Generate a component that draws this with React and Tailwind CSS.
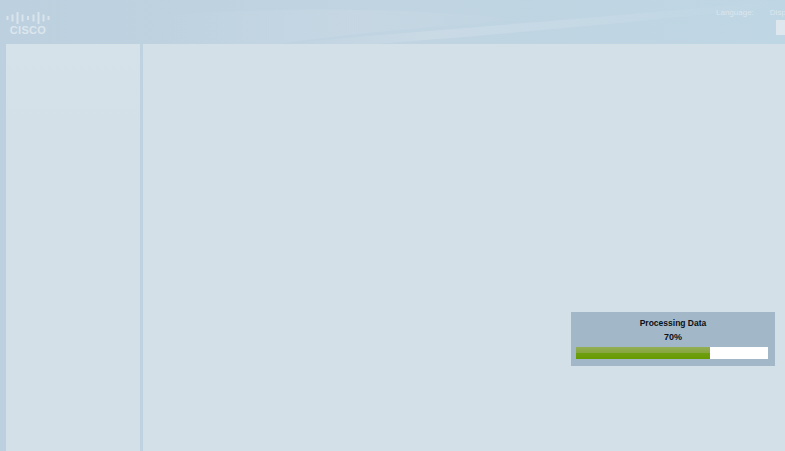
export default function App() {
  return (
    <div className="relative flex h-[451px] w-[785px] flex-col overflow-hidden bg-[#bdd0df] font-['Liberation_Sans',Arial,sans-serif]">
      <header className="relative flex h-[44px] shrink-0 justify-between overflow-hidden bg-gradient-to-r from-[#bcd0df] via-[#c0d4e1] to-[#bfd6e4]">
        <svg className="absolute inset-0" width="785" height="44" viewBox="0 0 785 44" aria-hidden="true">
          <defs>
            <linearGradient id="sw" x1="0" x2="1" y1="0" y2="0">
              <stop offset="0" stopColor="#d0dee8" stopOpacity="0" />
              <stop offset="0.3" stopColor="#d0dee8" stopOpacity="0.6" />
              <stop offset="1" stopColor="#cfe1ec" stopOpacity="0" />
            </linearGradient>
            <linearGradient id="sw2" x1="0" x2="1" y1="0" y2="0">
              <stop offset="0" stopColor="#cbdae5" stopOpacity="0" />
              <stop offset="0.55" stopColor="#cbdae5" stopOpacity="0.55" />
              <stop offset="1" stopColor="#cbdae5" stopOpacity="0" />
            </linearGradient>
          </defs>
          <path d="M280 44 C400 32 560 22 785 0 L785 6 C620 24 480 36 370 44 Z" fill="url(#sw)" />
          <path d="M150 16 C280 6 420 8 520 20 C440 26 340 34 280 44 L170 44 Z" fill="url(#sw2)" />
        </svg>
        <div className="relative ml-[6px] mt-[12px] flex w-[44px] flex-col items-center">
          <svg width="44" height="12" viewBox="0 0 44 12" aria-hidden="true">
            {[
              [1.5, 4], [6.5, 7], [11.5, 12], [16.5, 7], [22, 4], [27.5, 7], [32.5, 12], [37.5, 7], [42.5, 4],
            ].map(([x, h], i) => (
              <rect key={i} x={x - 1} y={(12 - h) / 2} width="2" height={h} fill="#d9e4ec" />
            ))}
          </svg>
          <span className="mt-[2px] text-[11px] font-bold leading-[9px] tracking-[0.3px] text-[#dce6ed]">CISCO</span>
        </div>
        <div className="relative flex flex-col items-end">
          <div className="mt-[7px] flex w-[69px] gap-[16px] overflow-hidden whitespace-nowrap text-[8px] leading-[11px] text-[#dbe6ee]">
            <span className="shrink-0">Language:</span>
            <span className="shrink-0">Display</span>
          </div>
          <div className="mt-[2px] h-[15px] w-[9px] bg-[#dfe7ee]" />
        </div>
      </header>
      <div className="flex min-h-0 flex-1 pl-[6px]">
        <aside className="w-[134px] shrink-0 bg-gradient-to-b from-[#d6e2e9] to-[#d4e0e8] to-20%" />
        <div className="w-[3px] shrink-0 bg-[#bfd2e0]" />
        <main className="relative flex-1 bg-[#d4e0e8]">
          <div className="absolute left-[428px] top-[268px] flex h-[54px] w-[204px] flex-col items-center bg-[#a2b7c8] px-[5px]">
            <div className="mt-[6px] text-[8.5px] font-bold leading-[11px] text-[#0b1016]">Processing Data</div>
            <div className="mt-[3px] text-[9px] font-bold leading-[11px] text-[#0b1016]">70%</div>
            <div className="mt-[4px] h-[12px] w-[192px] self-start bg-white">
              <div className="flex h-full w-[134px] flex-col">
                <div className="h-[6px] bg-gradient-to-b from-[#93ae55] to-[#86a63c]" />
                <div className="h-[6px] bg-gradient-to-b from-[#6f9f10] to-[#659a00]" />
              </div>
            </div>
          </div>
        </main>
      </div>
    </div>
  );
}
